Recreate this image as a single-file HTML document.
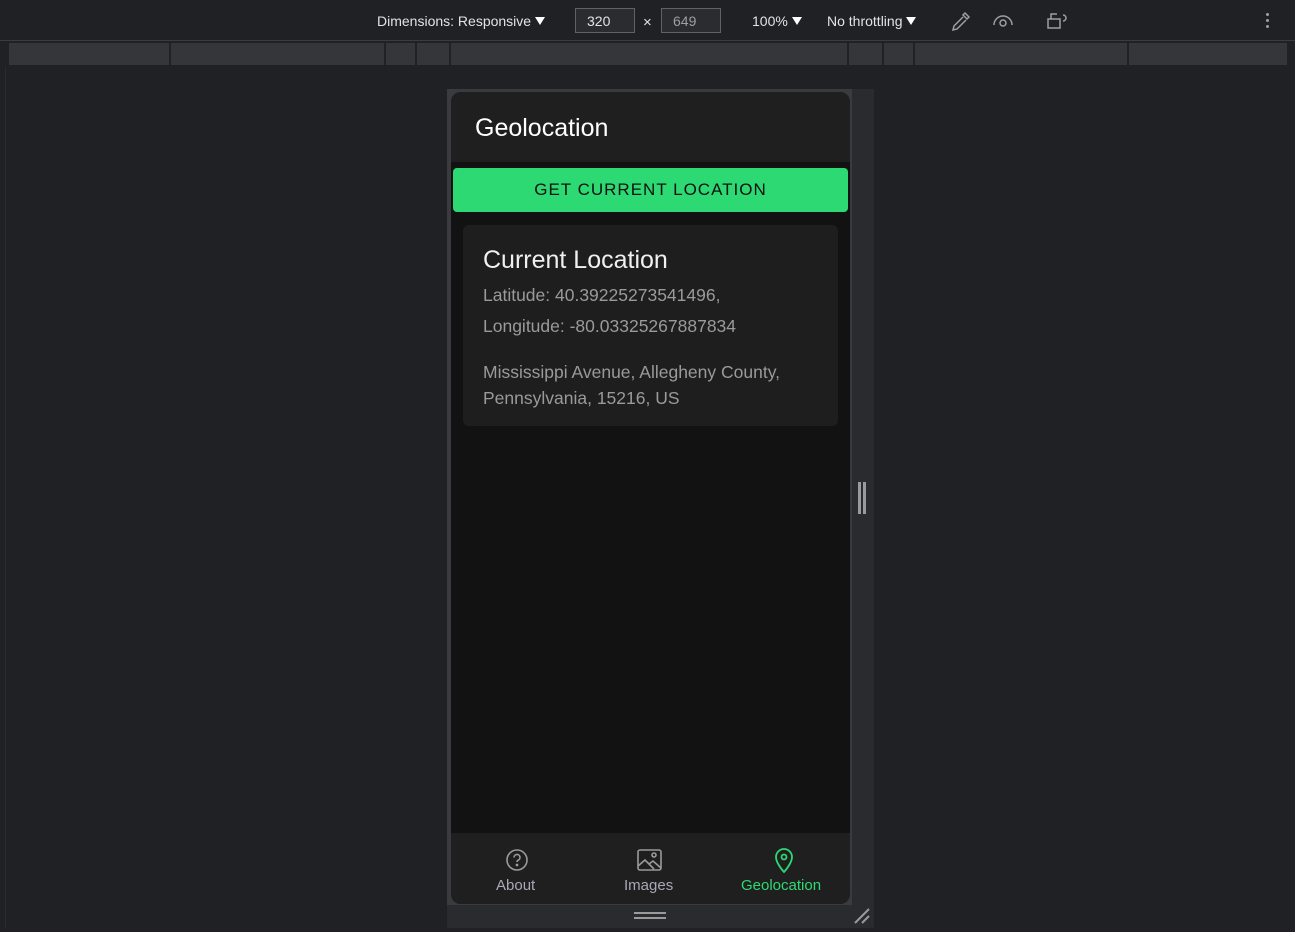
<!DOCTYPE html>
<html><head><style>
*{margin:0;padding:0;box-sizing:border-box}
body{width:1295px;height:932px;background:#202124;font-family:"Liberation Sans",sans-serif;position:relative;overflow:hidden}
.abs{position:absolute}
.tb{font-size:14px;color:#e3e3e3;top:13px}
.inp{border:1px solid #5f6368;background:#2b2c2f;height:25px;top:8px;width:60px;font-size:14px;padding:4px 11px}
.tri{display:inline-block;border-left:5px solid transparent;border-right:5px solid transparent;border-top:8px solid #fff;margin-left:4px;vertical-align:1px}
.ruler{top:43px;height:22px;background:#35363a;border-right:2px solid #202124}
</style></head><body>
<div class="abs" style="left:0;top:0;width:1295px;height:41px;background:#202124;border-bottom:1px solid #3c3c3c"></div>
<div class="abs tb" style="left:377px">Dimensions: Responsive<span class="tri"></span></div>
<div class="abs inp" style="left:575px;color:#e3e3e3">320</div>
<div class="abs tb" style="left:643px;top:14px;font-size:15px">×</div>
<div class="abs inp" style="left:661px;color:#9aa0a6">649</div>
<div class="abs tb" style="left:752px">100%<span class="tri"></span></div>
<div class="abs tb" style="left:827px">No throttling<span class="tri"></span></div>
<svg class="abs" style="left:950px;top:10px" width="22" height="22" viewBox="0 0 22 22" fill="none" stroke="#9aa0a6" stroke-width="1.5"><path d="M15 3l4 4-2 2-4-4zM13 7L4 16l-1 4 4-1 9-9"/></svg>
<svg class="abs" style="left:992px;top:12px" width="22" height="16" viewBox="0 0 22 16" fill="none" stroke="#9aa0a6" stroke-width="1.5"><path d="M2 13a9 9 0 0 1 18 0"/><circle cx="11" cy="11" r="3"/></svg>
<svg class="abs" style="left:1046px;top:11px" width="24" height="20" viewBox="0 0 24 20" fill="none" stroke="#9aa0a6" stroke-width="1.5"><rect x="2" y="8" width="12" height="9"/><path d="M5 8V3h6M17 4a3 3 0 0 1 0 6"/></svg>
<div class="abs" style="left:1266px;top:13px;width:3px;height:3px;background:#9aa0a6;box-shadow:0 6px #9aa0a6,0 12px #9aa0a6;border-radius:50%"></div>
<div class="abs" style="left:5px;top:42px;width:1285px;height:24px;background:#202124"></div>
<div class="abs ruler" style="left:9px;width:162px"></div>
<div class="abs ruler" style="left:171px;width:215px"></div>
<div class="abs ruler" style="left:386px;width:31px"></div>
<div class="abs ruler" style="left:417px;width:34px"></div>
<div class="abs ruler" style="left:451px;width:398px"></div>
<div class="abs ruler" style="left:849px;width:35px"></div>
<div class="abs ruler" style="left:884px;width:31px"></div>
<div class="abs ruler" style="left:915px;width:214px"></div>
<div class="abs ruler" style="left:1129px;width:160px"></div>
<div class="abs" style="left:5px;top:66px;width:1285px;height:862px;background:#202124;border-left:1px solid #2a2a2a"></div>
<div class="abs" style="left:447px;top:89px;width:427px;height:839px;background:#2a2b2e"></div>
<div class="abs" style="left:447px;top:89px;width:405px;height:816px;background:#3a3b3e"></div>
<div class="abs" style="left:451px;top:92px;width:399px;height:812px;background:#121212;border-radius:10px;overflow:hidden">
 <div style="height:70px;background:#1f1f1f;color:#fff;font-size:25px;padding:22px 0 0 24px">Geolocation</div>
 <div style="position:absolute;left:2px;top:76px;width:395px;height:44px;background:#2dd973;border-radius:4px;color:#111;font-size:17px;letter-spacing:1px;text-align:center;line-height:44px">GET CURRENT LOCATION</div>
 <div style="position:absolute;left:12px;top:133px;width:375px;height:201px;background:#1e1e1e;border-radius:6px;padding:21px 20px">
  <div style="color:#f0f0f0;font-size:25px">Current Location</div>
  <div style="color:#9a9a9a;font-size:17.5px;margin-top:10px">Latitude: 40.39225273541496,</div>
  <div style="color:#9a9a9a;font-size:17.5px;margin-top:10px">Longitude: -80.03325267887834</div>
  <div style="color:#9a9a9a;font-size:17.5px;margin-top:22px;line-height:26px">Mississippi Avenue, Allegheny County, Pennsylvania, 15216, US</div>
 </div>
 <div style="position:absolute;left:0;top:741px;width:399px;height:71px;background:#1f1f1f;font-size:15px">
  <svg style="position:absolute;left:55px;top:16px" width="22" height="22" viewBox="0 0 22 22" fill="none" stroke="#9a9a9a" stroke-width="1.6"><circle cx="11" cy="11" r="10"/><path d="M8 8.5a3 3 0 1 1 4 2.8c-.8.4-1 1-1 1.7"/><circle cx="11" cy="16" r=".6" fill="#9a9a9a"/></svg>
  <div style="position:absolute;left:45px;top:44px;color:#a8a8b8">About</div>
  <svg style="position:absolute;left:186px;top:16px" width="25" height="22" viewBox="0 0 25 22" fill="none" stroke="#9a9a9a" stroke-width="1.6"><rect x="1" y="1" width="23" height="20" rx="2"/><path d="M1 17l7-6 9 9M12 15l4-3 8 7"/><circle cx="17" cy="6" r="2"/></svg>
  <div style="position:absolute;left:173px;top:44px;color:#a8a8b8">Images</div>
  <svg style="position:absolute;left:323px;top:14px" width="20" height="26" viewBox="0 0 20 26" fill="none" stroke="#2dd973" stroke-width="1.8"><path d="M10 25s8-8.5 8-15a8 8 0 0 0-16 0c0 6.5 8 15 8 15z"/><circle cx="10" cy="10" r="2.5"/></svg>
  <div style="position:absolute;left:290px;top:44px;color:#2dd973">Geolocation</div>
 </div>
</div>
<div class="abs" style="left:858px;top:482px;width:3px;height:32px;background:#9a9a9a"></div>
<div class="abs" style="left:863px;top:482px;width:3px;height:32px;background:#9a9a9a"></div>
<div class="abs" style="left:634px;top:912px;width:32px;height:2px;background:#9a9a9a"></div>
<div class="abs" style="left:634px;top:917px;width:32px;height:2px;background:#9a9a9a"></div>
<svg class="abs" style="left:853px;top:907px" width="18" height="18" viewBox="0 0 18 18" stroke="#9a9a9a" stroke-width="2"><path d="M2 16L16 2M9 16l7-7"/></svg>
</body></html>
